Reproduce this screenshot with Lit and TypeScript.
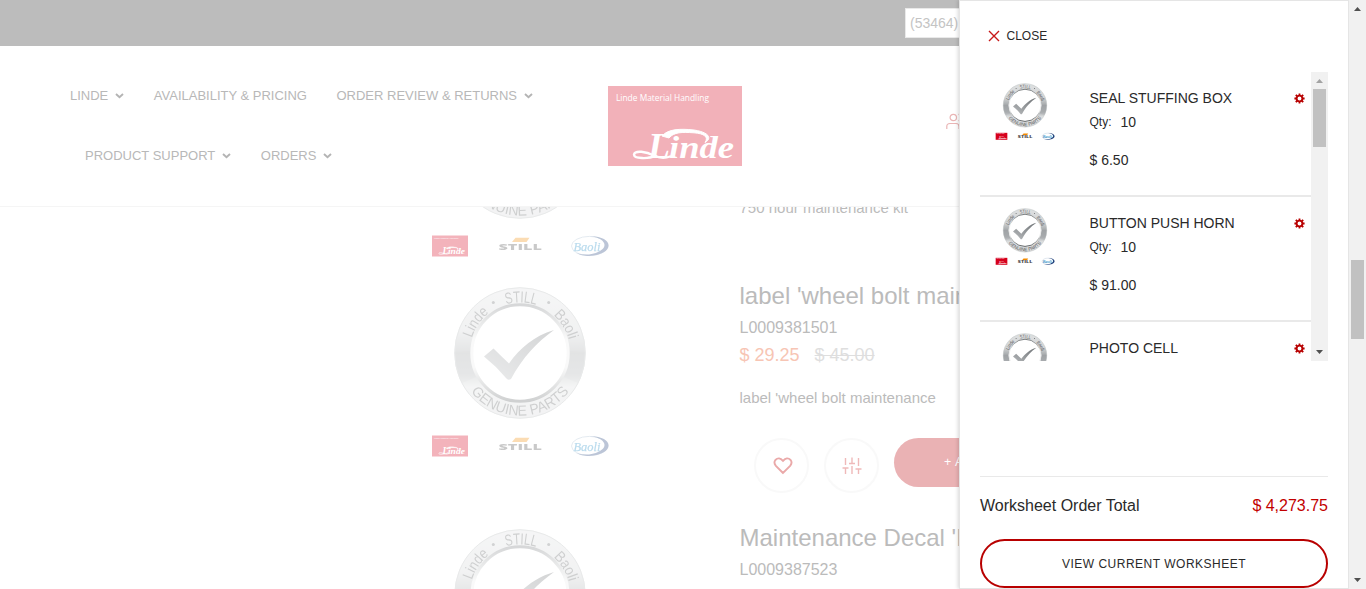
import { LitElement, html, css, svg } from "lit";
import { customElement, property } from "lit/decorators.js";

const lindeMark = svg`
  <rect width="134" height="80" fill="#d6001c"></rect>
  <text x="8" y="15" font-family="Open Sans, sans-serif" font-size="9.3" fill="#fff" textLength="93" lengthAdjust="spacingAndGlyphs">Linde Material Handling</text>
  <text font-family="Liberation Serif, serif" font-style="italic" font-weight="700" fill="#fff"><tspan x="40" y="71.5" font-size="36">L</tspan><tspan x="61" y="71.5" font-size="31" textLength="65" lengthAdjust="spacingAndGlyphs">inde</tspan></text>
  <path d="M54 50C60 43 72 42.500 86 44C100 46 105 52 97 56.500C101 51 96 47.500 86 46.800C74 46 66 46 61 52Z" fill="#fff" stroke="#fff" stroke-width="1"></path>
  <path d="M48 70C40 73 26 73 26 68.500C27 64 38 65.500 46 69.500Q54 73.500 62 70.500" fill="none" stroke="#fff" stroke-width="2.400" stroke-linecap="round"></path>`;

@customElement("linde-logo")
export class LindeLogo extends LitElement {
  static styles = css`
    :host { display: block; width: 134px; height: 80px; }
    .logo { display: block; }
  `;
  render() {
    return html`<svg class="logo" width="134" height="80" viewBox="0 0 134 80">${lindeMark}</svg>`;
  }
}

@customElement("genuine-badge")
export class GenuineBadge extends LitElement {
  @property({ type: Number }) scale = 1;
  static styles = css`
    :host { display: block; }
    .badge { display: block; }
    .ring { font-family: "Liberation Sans", Arial, sans-serif; fill: #5e6163; }
  `;
  render() {
    return html`
      <svg class="badge" width=${180 * this.scale} height=${176 * this.scale} viewBox="-90 -67 180 176">
        <defs>
          <linearGradient id="band" x1="0" y1="0" x2="0" y2="1">
            <stop offset="0" stop-color="#dcdedf"></stop>
            <stop offset=".3" stop-color="#d2d4d5"></stop>
            <stop offset=".5" stop-color="#a3a7a9"></stop>
            <stop offset=".68" stop-color="#aeb2b4"></stop>
            <stop offset=".8" stop-color="#dcdedf"></stop>
            <stop offset="1" stop-color="#d6d8d9"></stop>
          </linearGradient>
          <linearGradient id="rim" x1="0" y1="0" x2="0" y2="1">
            <stop offset="0" stop-color="#777b7d"></stop>
            <stop offset=".35" stop-color="#e9eaea"></stop>
            <stop offset=".65" stop-color="#e9eaea"></stop>
            <stop offset="1" stop-color="#606466"></stop>
          </linearGradient>
          <linearGradient id="tick" x1="0" y1="1" x2=".8" y2="0">
            <stop offset="0" stop-color="#b9bcbe"></stop>
            <stop offset="1" stop-color="#74787b"></stop>
          </linearGradient>
          <path id="upper" d="M-50.5 0A50.5 50.5 0 0 1 50.5 0"></path>
          <path id="lower" d="M-62.5 0A62.5 62.5 0 0 0 62.5 0"></path>
        </defs>
        <circle r="57" fill="none" stroke="url(#band)" stroke-width="17"></circle>
        <path d="M-65-1L-50 -2A50 50 0 0 0 -44 24L-58 30A65 65 0 0 1 -65-1ZM65-1L50-2A50 50 0 0 1 44 24L58 30A65 65 0 0 0 65-1Z" fill="#8e9294" opacity=".18"></path>
        <circle r="65.3" fill="none" stroke="#b4b8b9" stroke-width="1"></circle>
        <circle r="48.2" fill="none" stroke="url(#rim)" stroke-width="3"></circle>
        <text class="ring" font-size="15"><textPath href="#upper" startOffset="9.5%" textLength="31" lengthAdjust="spacingAndGlyphs">Linde</textPath></text>
        <text class="ring" font-size="16"><textPath href="#upper" startOffset="41%" textLength="30.5" lengthAdjust="spacingAndGlyphs">STILL</textPath></text>
        <text class="ring" font-size="15"><textPath href="#upper" startOffset="73%" textLength="29.5" lengthAdjust="spacingAndGlyphs">Baoli</textPath></text>
        <circle cx="-26.7" cy="-50.5" r="1.5" fill="#66696b"></circle>
        <circle cx="28.7" cy="-50.5" r="1.5" fill="#66696b"></circle>
        <text class="ring" font-size="14.5"><textPath href="#lower" startOffset="50%" text-anchor="middle" textLength="113" lengthAdjust="spacingAndGlyphs">GENUINE PARTS</textPath></text>
        <path d="M-36 3.5L-26.5 -4.5Q-19 3 -11 10.5C0 -5 14 -17 34 -23C16 -10 3 4 -9 26Q-12 28 -14 25Q-24 13 -36 3.5Z" fill="url(#tick)"></path>
        <g transform="translate(-88 82.5) scale(.2612)">${lindeMark}</g>
        <path d="M-8 89L-4.5 84.7H9.5L6.5 89Z" fill="#f28a00"></path>
        <text x="-21.5" y="97.2" font-family="Open Sans, sans-serif" font-weight="800" font-size="8.5" fill="#4a4a4a" textLength="43.5" lengthAdjust="spacingAndGlyphs">STILL</text>
        <ellipse cx="69.5" cy="93" rx="18" ry="9.6" fill="#fff" stroke="#8fa9c2" stroke-width=".8"></ellipse>
        <path d="M70 83.2C94 83 96 101 69 103Q62 103.500 56 100Q62 102 69 101.500C90 98 89 85.500 70 83.200Z" fill="#1f3f7a"></path>
        <text x="53.5" y="97.500" font-family="Liberation Serif, serif" font-style="italic" font-size="13" fill="#1787c4" stroke="#1787c4" stroke-width=".25" textLength="27" lengthAdjust="spacingAndGlyphs">Baoli</text>
      </svg>`;
  }
}

interface Item { name: string; qty?: string; price?: string; }
interface NavLink { label: string; menu: boolean; }

@customElement("app-root")
export class AppRoot extends LitElement {
  static styles = css`
    :host { display: block; font-family: "Liberation Sans", Arial, sans-serif; }
    .stage { position: relative; display: flex; width: 1366px; height: 589px; overflow: hidden; background: #fff; }
    .page { flex: 1; min-width: 0; display: flex; flex-direction: column; overflow: hidden; }
    .topbar { flex: none; height: 46px; box-sizing: border-box; padding: 8px 0 0 905px; background: #bcbcbc; }
    .field { width: 180px; height: 30px; box-sizing: border-box; border: 1px solid #e9e9e9; background: #fff; padding-left: 4px; font-size: 14px; line-height: 29px; color: #c4c4c4; }
    .header { flex: none; height: 161px; box-sizing: border-box; border-bottom: 1px solid #f5f5f5; display: grid; grid-template-columns: 608px 338px 1fr; }
    .nav { padding: 19px 0 0 70px; font-size: 13px; color: #b8b8b8; }
    .line { display: flex; gap: 29.500px; height: 60px; }
    .line.second { padding-left: 15px; }
    .link { display: flex; align-items: center; gap: 7px; white-space: nowrap; }
    .brand { padding-top: 40px; opacity: .3; }
    .account { padding-top: 66px; }
    .products { flex: 1; min-height: 0; overflow: hidden; }
    .product { display: grid; grid-template-columns: 309.500px 1fr; padding-left: 430px; height: 242px; }
    .product.first { height: 200px; margin-top: -121px; }
    .photo { opacity: .3; }
    .info { color: #bbb; white-space: nowrap; }
    .title { font-size: 24px; line-height: 20px; }
    .sku { font-size: 16px; line-height: 20px; margin-top: 11px; padding-top: 1px; }
    .prices { display: flex; gap: 15px; margin-top: 5px; font-size: 18px; line-height: 24px; color: #f7c5b4; }
    .old { color: #dedede; text-decoration: line-through; }
    .desc { margin-top: 22px; font-size: 15px; line-height: 18px; }
    .first .desc { margin-top: 113px; }
    .actions { display: flex; gap: 15px; padding: 31px 0 0 14.500px; }
    .round { width: 55px; height: 55px; box-sizing: border-box; border: 2px solid #f9f9f9; border-radius: 50%; display: flex; align-items: center; justify-content: center; }
    .heart { padding-left: 2px; }
    .add { width: 180px; height: 49px; box-sizing: border-box; border-radius: 25px; background: #eab2b4; color: #fff; font-size: 12.500px; letter-spacing: .5px; line-height: 49px; padding-left: 50px; }
    .drawer { position: absolute; left: 959px; top: 0; width: 390px; height: 589px; box-sizing: border-box; border: 1px solid #e5e5e5; background: #fff; box-shadow: -1px 0 4px rgba(0,0,0,.16); padding: 25px 20px 0; display: flex; flex-direction: column; color: #2a2a2a; clip-path: inset(0 0 0 -8px); }
    .close { display: flex; align-items: center; gap: 6.500px; height: 20px; padding-left: 8px; font-size: 12px; flex: none; }
    .list { flex: none; display: flex; height: 289px; margin-top: 26px; overflow: hidden; }
    .items { width: 331px; height: 289px; overflow: hidden; }
    .item { height: 125px; box-sizing: border-box; border-bottom: 2px solid #e9e9e9; display: grid; grid-template-columns: 94.500px 1fr 17.500px; padding: 11.300px 0 0 15px; font-size: 14px; }
    .name { line-height: 20px; margin-top: 4.700px; }
    .qty { display: flex; align-items: center; gap: 9px; margin-top: 4px; line-height: 20px; }
    .small { font-size: 12px; }
    .price { margin-top: 18px; line-height: 20px; }
    .gear { padding-top: 9.700px; }
    .track { width: 17px; background: #f1f1f1; display: flex; flex-direction: column; align-items: center; }
    .cap { height: 17px; width: 17px; flex: none; display: block; }
    .thumb { width: 13px; height: 58px; background: #c1c1c1; }
    .fill { flex: 1; }
    .total { flex: none; display: flex; justify-content: space-between; margin-top: 115px; border-top: 1px solid #e9e9e9; padding-top: 18px; font-size: 16px; line-height: 22px; }
    .amount { color: #c20000; }
    .view { flex: none; margin-top: 22px; height: 49px; box-sizing: border-box; border: 2px solid #b80000; border-radius: 25px; text-align: center; font-size: 12px; letter-spacing: .5px; line-height: 46px; }
    .pagebar { flex: none; }
    .pagebar .lead { height: 243px; }
    .pagebar .thumb { height: 79px; }
    svg { display: block; flex: none; }
  `;

  private rows: NavLink[][] = [
    [{ label: "LINDE", menu: true }, { label: "AVAILABILITY & PRICING", menu: false }, { label: "ORDER REVIEW & RETURNS", menu: true }],
    [{ label: "PRODUCT SUPPORT", menu: true }, { label: "ORDERS", menu: true }],
  ];

  private items: Item[] = [
    { name: "SEAL STUFFING BOX", qty: "10", price: "$ 6.50" },
    { name: "BUTTON PUSH HORN", qty: "10", price: "$ 91.00" },
    { name: "PHOTO CELL" },
  ];

  private link(l: NavLink) {
    return html`<div class="link">${l.label}${l.menu
      ? html`<svg width="9" height="7" viewBox="0 0 9 7"><path d="M1 2L4.500 5.300L8 2" fill="none" stroke="#b4b4b4" stroke-width="1.900"></path></svg>`
      : null}</div>`;
  }

  private cap(down: boolean, color: string) {
    return html`<svg class="cap" viewBox="0 0 17 17"><path d=${down ? "M5 6H12L8.500 10Z" : "M5 11H12L8.500 7Z"} fill=${color}></path></svg>`;
  }

  private item(i: Item) {
    return html`<div class="item">
      <genuine-badge .scale=${1 / 3}></genuine-badge>
      <div>
        <div class="name">${i.name}</div>
        ${i.qty ? html`<div class="qty"><span class="small">Qty:</span><span>${i.qty}</span></div>` : null}
        ${i.price ? html`<div class="price">${i.price}</div>` : null}
      </div>
      <div class="gear"><svg width="11" height="11" viewBox="-5.500 -5.500 11 11">
        <circle r="2.900" fill="none" stroke="#b80000" stroke-width="1.900"></circle>
        <path d="M0-3.500V-5.100M0 3.500V5.100M-3.500 0H-5.100M3.500 0H5.100M-2.500-2.500L-3.700-3.700M2.500-2.500L3.700-3.700M-2.500 2.500L-3.700 3.700M2.500 2.500L3.700 3.700" stroke="#b80000" stroke-width="1.800"></path>
      </svg></div>
    </div>`;
  }

  render() {
    return html`<div class="stage">
      <div class="page">
        <div class="topbar"><div class="field">(53464)</div></div>
        <div class="header">
          <div class="nav">
            <div class="line">${this.rows[0].map((l) => this.link(l))}</div>
            <div class="line second">${this.rows[1].map((l) => this.link(l))}</div>
          </div>
          <div class="brand"><linde-logo></linde-logo></div>
          <div class="account"><svg width="22" height="18" viewBox="0 0 22 18" fill="none" stroke="#eab5b5" stroke-width="1.200">
            <circle cx="7.300" cy="5.500" r="3.200"></circle><path d="M.8 17V14.500Q.8 11.500 4 11.500H10Q13 11.500 13 14.500V17M12.500 2.300Q15.500 2.500 15.500 5.500T12.500 8.700"></path>
          </svg></div>
        </div>
        <div class="products">
          <div class="product first">
            <genuine-badge class="photo"></genuine-badge>
            <div class="info"><div class="desc">750 hour maintenance kit</div></div>
          </div>
          <div class="product">
            <genuine-badge class="photo"></genuine-badge>
            <div class="info">
              <div class="title">label 'wheel bolt maintenance</div>
              <div class="sku">L0009381501</div>
              <div class="prices"><span>$ 29.25</span><span class="old">$ 45.00</span></div>
              <div class="desc">label 'wheel bolt maintenance</div>
              <div class="actions">
                <div class="round heart"><svg width="20" height="18" viewBox="0 0 20 18"><path d="M10 16L2.900 8.900Q.3 5.700 2.400 3Q6-.6 10 3.900Q14-.6 17.600 3Q19.700 5.700 17.100 8.900Z" fill="none" stroke="#eaa9a9" stroke-width="1.900"></path></svg></div>
                <div class="round"><svg width="20" height="18" viewBox="0 0 20 18"><path d="M3.500 1V8M.5 11H6.500M3.500 11V17M10 .5V6M7 6.500H13M10 9V17M16.500 1V9M13.500 12H19.500M16.500 12V17" fill="none" stroke="#efb9b9" stroke-width="1.400"></path></svg></div>
                <div class="add">+ ADD TO CART</div>
              </div>
            </div>
          </div>
          <div class="product">
            <genuine-badge class="photo"></genuine-badge>
            <div class="info">
              <div class="title">Maintenance Decal 'Linde'</div>
              <div class="sku">L0009387523</div>
            </div>
          </div>
        </div>
      </div>
      <div class="track pagebar">
        ${this.cap(false, "#505050")}<div class="lead"></div><div class="thumb"></div><div class="fill"></div>${this.cap(true, "#505050")}
      </div>
      <div class="drawer">
        <div class="close"><svg width="12" height="12" viewBox="0 0 12 12"><path d="M1 1L11 11M11 1L1 11" stroke="#c81818" stroke-width="1.400"></path></svg>CLOSE</div>
        <div class="list">
          <div class="items">${this.items.map((i) => this.item(i))}</div>
          <div class="track">
            ${this.cap(false, "#a3a3a3")}<div class="thumb"></div><div class="fill"></div>${this.cap(true, "#505050")}
          </div>
        </div>
        <div class="total"><span>Worksheet Order Total</span><span class="amount">$ 4,273.75</span></div>
        <div class="view">VIEW CURRENT WORKSHEET</div>
      </div>
    </div>`;
  }
}
